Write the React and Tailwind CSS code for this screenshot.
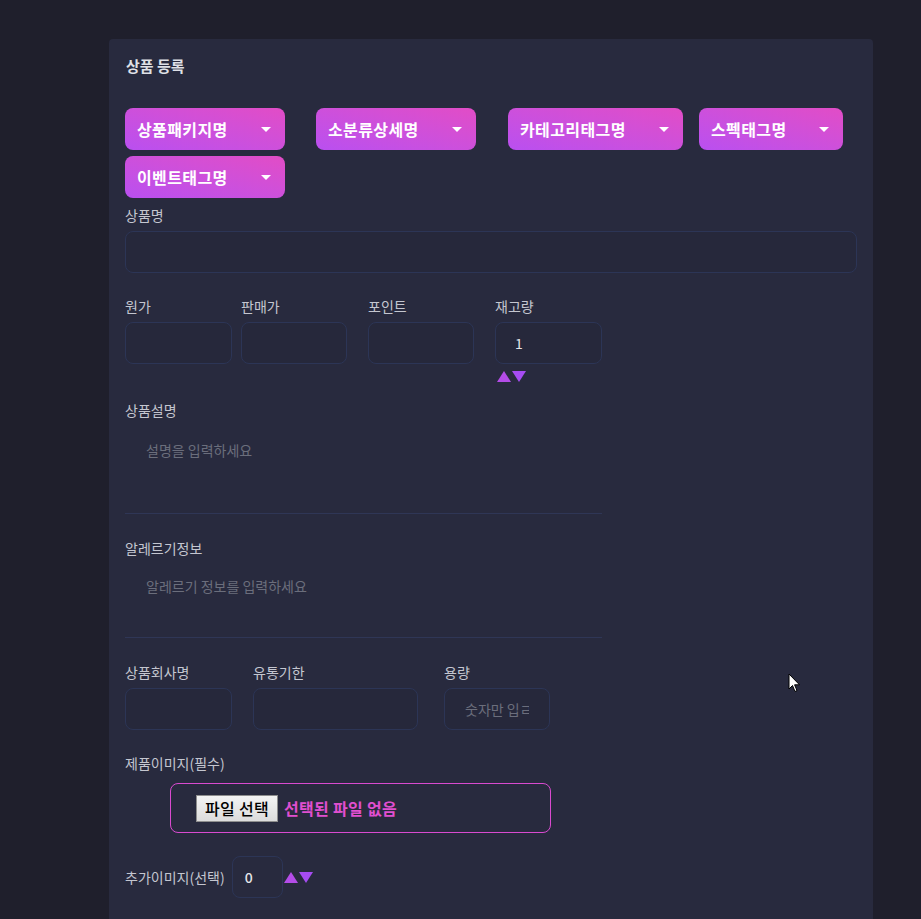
import { useState } from 'react'

const font = { fontFamily: '"Noto Sans CJK KR", "Noto Sans", sans-serif' }

function Dropdown({ label, className = '' }) {
  return (
    <div
      className={`h-[42px] rounded-lg bg-gradient-to-tr from-[#b94ff0] to-[#e24cc6] flex items-center justify-between pl-3 pr-3 text-white font-bold text-[16px] tracking-[0.4px] ${className}`}
    >
      <span>{label}</span>
      <span className="w-0 h-0 border-l-[5px] border-r-[5px] border-t-[5px] border-l-transparent border-r-transparent border-t-white mr-0.5" />
    </div>
  )
}

function Field({ label, className = '', value, placeholder }) {
  return (
    <div className={`flex flex-col ${className}`}>
      <label className="text-[14px] text-[#c4c6d0] mb-[6px] leading-5">{label}</label>
      <div className="h-[42px] rounded-lg border border-[#2c3556] bg-[#26283b] flex items-center px-5 text-[14px]">
        {value && <span className="text-[#e4e5ea] -ml-[1px]">{value}</span>}
        {placeholder && <span className="text-[#6b6e7c] whitespace-nowrap overflow-hidden">{placeholder}</span>}
      </div>
    </div>
  )
}

function Spinner() {
  return (
    <div className="flex items-center gap-[1px]">
      <span className="w-0 h-0 border-l-[7px] border-r-[7px] border-b-[11px] border-l-transparent border-r-transparent border-b-[#b44ce8]" />
      <span className="w-0 h-0 border-l-[7px] border-r-[7px] border-t-[11px] border-l-transparent border-r-transparent border-t-[#a64cf2]" />
    </div>
  )
}

export default function App() {
  const [count] = useState(0)

  return (
    <div className="min-h-screen bg-[#1f1f2c] relative" style={font}>
      <div className="pt-[39px] pl-[109px] pr-[48px]">
        <div className="bg-[#282a3e] rounded-t-[4px] w-[764px] px-4 pt-[17px] pb-6 min-h-[880px]">
          <h1 className="text-[15px] font-bold text-[#dfe0e6] leading-5 pl-px">상품 등록</h1>

          <div className="mt-[32px] flex flex-wrap gap-y-[6px]">
            <Dropdown label="상품패키지명" className="w-[160px]" />
            <Dropdown label="소분류상세명" className="w-[160px] ml-[31px]" />
            <Dropdown label="카테고리태그명" className="w-[175px] ml-[32px]" />
            <Dropdown label="스펙태그명" className="w-[144px] ml-[16px]" />
            <Dropdown label="이벤트태그명" className="w-[160px]" />
          </div>

          <div className="mt-[7px]">
            <Field label="상품명" className="w-[732px]" />
          </div>

          <div className="mt-[23px] flex items-start">
            <Field label="원가" className="w-[107px]" />
            <Field label="판매가" className="w-[106px] ml-[9px]" />
            <Field label="포인트" className="w-[106px] ml-[21px]" />
            <div className="ml-[21px] w-[107px]">
              <Field label="재고량" value="1" />
              <div className="mt-[7px] ml-[2px]">
                <Spinner />
              </div>
            </div>
          </div>

          <div className="mt-[18px] w-[477px] border-b border-[#2f3656] pb-[53px]">
            <label className="block text-[14px] text-[#c4c6d0] leading-5">상품설명</label>
            <p className="mt-[20px] ml-[21px] text-[14px] text-[#6b6e7c] leading-5">설명을 입력하세요</p>
          </div>

          <div className="mt-[24px] w-[477px] border-b border-[#2f3656] pb-[41px]">
            <label className="block text-[14px] text-[#c4c6d0] leading-5">알레르기정보</label>
            <p className="mt-[18px] ml-[21px] text-[14px] text-[#6b6e7c] leading-5">알레르기 정보를 입력하세요</p>
          </div>

          <div className="mt-[24px] flex items-start">
            <Field label="상품회사명" className="w-[107px]" />
            <Field label="유통기한" className="w-[165px] ml-[21px]" />
            <Field label="용량" className="w-[106px] ml-[26px]" placeholder="숫자만 입ㄹ" />
          </div>

          <div className="mt-[23px]">
            <label className="block text-[14px] text-[#c4c6d0] leading-5">제품이미지(필수)</label>
            <div className="mt-[10px] ml-[45px] w-[381px] h-[50px] rounded-lg border border-[#d94ad0] flex items-center pl-[25px]">
              <span className="h-[27px] px-[8px] flex items-center bg-gradient-to-b from-[#f4f4f4] to-[#dcdcdc] border border-[#8e8e8e] text-black text-[16px] font-medium tracking-[0.3px]">
                파일 선택
              </span>
              <span className="ml-[6px] text-[#e04fd0] text-[16px] font-bold tracking-[0.3px]">선택된 파일 없음</span>
            </div>
          </div>

          <div className="mt-[23px] flex items-center">
            <label className="text-[14px] text-[#c4c6d0] leading-5">추가이미지(선택)</label>
            <div className="ml-[7px] w-[51px] h-[42px] rounded-lg border border-[#2c3556] flex items-center pl-[12px] text-[14px] text-[#e4e5ea] font-medium">
              {count}
            </div>
            <div className="ml-[1px]">
              <Spinner />
            </div>
          </div>
        </div>
      </div>

      <svg className="absolute left-[788px] top-[673px]" width="13" height="20" viewBox="0 0 13 20">
        <path d="M1 1 L1 16 L4.5 12.5 L7 18.5 L9 17.6 L6.6 11.8 L11.5 11.8 Z" fill="#fff" stroke="#000" strokeWidth="1" />
      </svg>
    </div>
  )
}
